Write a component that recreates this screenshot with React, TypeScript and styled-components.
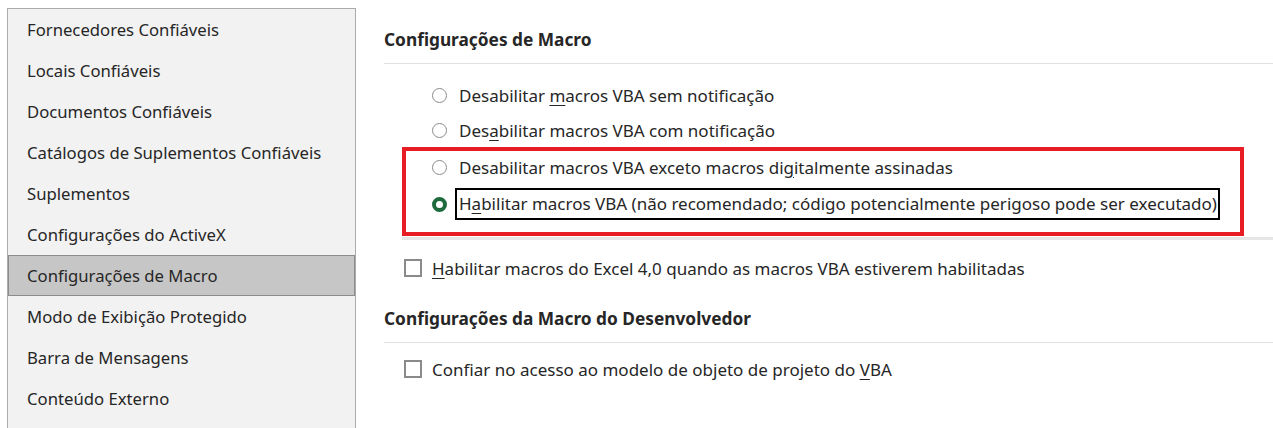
import React from "react";
import styled, { createGlobalStyle } from "styled-components";

const Global = createGlobalStyle`
  html, body { margin: 0; padding: 0; background: #ffffff; }
  body { font-family: "Noto Sans", "Open Sans", sans-serif; color: #262626; overflow: hidden; }
`;

const Page = styled.div`
  display: flex;
  width: 1273px;
  height: 428px;
  overflow: hidden;
`;

const Sidebar = styled.nav`
  margin: 8px 0 0 7px;
  width: 347px;
  flex: none;
  background: #f2f2f2;
  border: 1px solid #ababab;
  border-bottom: none;
  height: 440px;
`;

const NavItem = styled.div<{ $active?: boolean }>`
  height: 41px;
  box-sizing: border-box;
  display: flex;
  align-items: center;
  padding-left: 18px;
  font-size: 16.7px;
  background: ${(p) => (p.$active ? "#c6c6c6" : "transparent")};
  border: 1px solid ${(p) => (p.$active ? "#8c8c8c" : "transparent")};
  white-space: nowrap;
`;

const Content = styled.main`
  flex: 1;
  padding-left: 28px;
  padding-top: 28px;
  display: flex;
  flex-direction: column;
`;

const Heading = styled.h2<{ $top?: number }>`
  margin: ${(p) => p.$top ?? 0}px 0 0 0;
  font-size: 17.3px;
  font-weight: 700;
  line-height: 24px;
  color: #262626;
`;

const Separator = styled.div<{ $left?: number; $thick?: number; $color?: string; $top?: number }>`
  height: ${(p) => p.$thick ?? 1}px;
  background: ${(p) => p.$color ?? "#e1e1e1"};
  margin-left: ${(p) => p.$left ?? 0}px;
  margin-top: ${(p) => p.$top ?? 0}px;
`;

const RadioGroup = styled.div`
  display: flex;
  flex-direction: column;
  padding-top: 14px;
`;

const Row = styled.label<{ $indent?: number; $h?: number }>`
  display: flex;
  align-items: center;
  height: ${(p) => p.$h ?? 35}px;
  padding-left: ${(p) => p.$indent ?? 0}px;
  font-size: 17px;
  white-space: nowrap;
  gap: 12px;
`;

const Radio = styled.span<{ $checked?: boolean }>`
  width: 15px;
  height: 15px;
  box-sizing: border-box;
  border-radius: 50%;
  flex: none;
  border: ${(p) => (p.$checked ? "4px solid #1d6b3d" : "1.5px solid #8a8a8a")};
  background: #fff;
`;

const Highlight = styled.div`
  margin-left: 18px;
  width: 842px;
  box-sizing: border-box;
  border: 4px solid #e81c24;
  padding: 0 0 7px 0;
  display: flex;
  flex-direction: column;
`;

const Focus = styled.span`
  border: 2px solid #000;
  padding: 3px 1px 3px 2px;
  margin-left: -4px;
  line-height: 22px;
`;

const Checkbox = styled.span`
  width: 18px;
  height: 18px;
  box-sizing: border-box;
  border: 2px solid #8a8a8a;
  background: #fff;
  flex: none;
`;

const CheckRow = styled.label<{ $top: number }>`
  display: flex;
  align-items: center;
  gap: 10px;
  margin-left: 20px;
  margin-top: ${(p) => p.$top}px;
  height: 24px;
  font-size: 17px;
  white-space: nowrap;
`;

const U = styled.span`
  text-decoration: underline;
  text-underline-offset: 3px;
`;

const navItems = [
  "Fornecedores Confiáveis",
  "Locais Confiáveis",
  "Documentos Confiáveis",
  "Catálogos de Suplementos Confiáveis",
  "Suplementos",
  "Configurações do ActiveX",
  "Configurações de Macro",
  "Modo de Exibição Protegido",
  "Barra de Mensagens",
  "Conteúdo Externo",
];

export default function App() {
  return (
    <>
      <Global />
      <Page>
        <Sidebar>
          {navItems.map((n) => (
            <NavItem key={n} $active={n === "Configurações de Macro"}>
              {n}
            </NavItem>
          ))}
        </Sidebar>
        <Content>
          <Heading>Configurações de Macro</Heading>
          <Separator $top={11} />
          <RadioGroup>
            <Row $indent={48}>
              <Radio />
              <span>
                Desabilitar <U>m</U>acros VBA sem notificação
              </span>
            </Row>
            <Row $indent={48} $h={34}>
              <Radio />
              <span>
                Des<U>a</U>bilitar macros VBA com notificação
              </span>
            </Row>
            <Highlight>
              <Row $indent={26} $h={32}>
                <Radio />
                <span>
                  Desabilitar macros VBA exceto macros di<U>g</U>italmente assinadas
                </span>
              </Row>
              <Row $indent={26} $h={42}>
                <Radio $checked />
                <Focus>
                  H<U>a</U>bilitar macros VBA (não recomendado; código potencialmente perigoso pode ser executado)
                </Focus>
              </Row>
            </Highlight>
            <Separator $left={18} $thick={3} $color="#e6e6e6" $top={1} />
          </RadioGroup>
          <CheckRow $top={16}>
            <Checkbox />
            <span>
              <U>H</U>abilitar macros do Excel 4,0 quando as macros VBA estiverem habilitadas
            </span>
          </CheckRow>
          <Heading $top={27}>Configurações da Macro do Desenvolvedor</Heading>
          <Separator $top={11} />
          <CheckRow $top={14}>
            <Checkbox />
            <span>
              Confiar no acesso ao modelo de objeto de projeto do <U>V</U>BA
            </span>
          </CheckRow>
        </Content>
      </Page>
    </>
  );
}
